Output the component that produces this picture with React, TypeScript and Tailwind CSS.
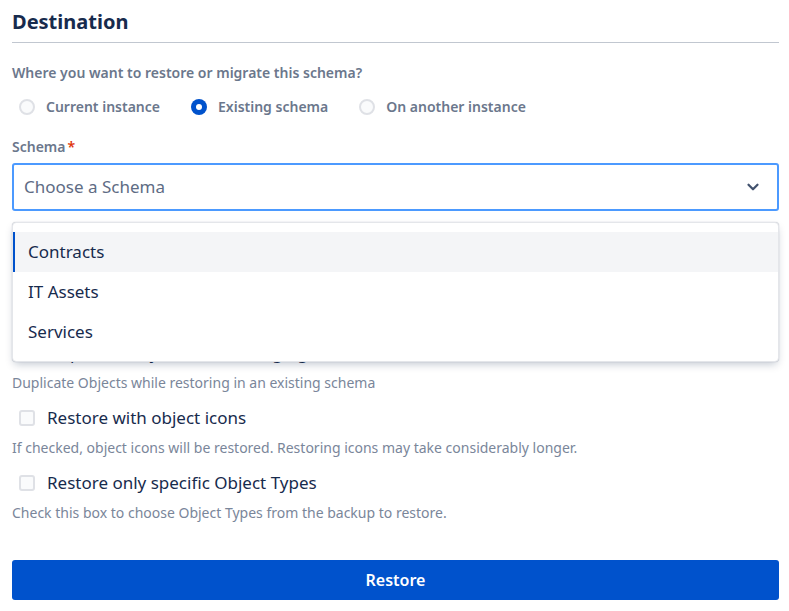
import { ChevronDown } from "lucide-react";

const FONT = "font-['Noto_Sans','Open_Sans',sans-serif]";

type RadioProps = { label: string; checked?: boolean };

function Radio({ label, checked = false }: RadioProps) {
  return (
    <label className="flex items-center gap-[11px]">
      {checked ? (
        <span className="flex h-4 w-4 items-center justify-center rounded-full bg-[#0052cc]">
          <span className="h-[6px] w-[6px] rounded-full bg-white" />
        </span>
      ) : (
        <span className="h-4 w-4 rounded-full border-2 border-[#dfe1e6] bg-[#fafbfc]" />
      )}
      <span className="text-[14px] font-semibold leading-5 text-[#6b778c]">{label}</span>
    </label>
  );
}

type OptionProps = { label: string; help: string };

function CheckOption({ label, help }: OptionProps) {
  return (
    <div>
      <label className="flex h-6 items-center gap-[12px] pl-[7px]">
        <span className="h-4 w-4 rounded-[3px] border-2 border-[#dfe1e6] bg-[#fafbfc]" />
        <span className="text-[17px] leading-6 text-[#172b4d]">{label}</span>
      </label>
      <p className="mt-2 text-[14px] leading-5 text-[#7a869a]">{help}</p>
    </div>
  );
}

const schemas = ["Contracts", "IT Assets", "Services"];

export default function App() {
  return (
    <div className={`${FONT} h-[611px] w-[789px] overflow-hidden bg-white pl-3 pr-[10px]`}>
      <h1 className="border-b border-[#c1c7d0] pb-[4px] pt-[6px] text-[20px] font-bold leading-8 text-[#172b4d]">
        Destination
      </h1>

      <p className="mt-[20px] text-[14px] font-semibold leading-5 text-[#6b778c]">
        Where you want to restore or migrate this schema?
      </p>
      <div className="mt-[14px] flex gap-[31px] pl-[7px]">
        <Radio label="Current instance" />
        <Radio label="Existing schema" checked />
        <Radio label="On another instance" />
      </div>

      <div className="relative mt-[20px]">
        <div className="text-[14px] font-semibold leading-5 text-[#6b778c]">
          Schema<span className="ml-[2px] text-[#de350b]">*</span>
        </div>
        <div className="mt-[6px] flex h-12 items-center justify-between rounded-[3px] border-2 border-[#4c9aff] bg-white pl-[10px] pr-[15px]">
          <span className="text-[17px] text-[#5e6c84]">Choose a Schema</span>
          <ChevronDown className="h-[18px] w-[18px] text-[#42526e]" strokeWidth={3} />
        </div>

        <ul className="absolute left-0 right-0 top-[85px] z-10 rounded-[4px] border border-[#e4e6ea] bg-white py-[9px] shadow-[0_4px_8px_-2px_rgba(9,30,66,0.25),0_0_1px_rgba(9,30,66,0.31)]">
          {schemas.map((s, i) => (
            <li
              key={s}
              className={
                i === 0
                  ? "flex h-10 items-center border-l-2 border-[#0052cc] bg-[#f4f5f7] pl-[13px] text-[17px] text-[#172b4d]"
                  : "flex h-10 items-center pl-[15px] text-[17px] text-[#172b4d]"
              }
            >
              {s}
            </li>
          ))}
        </ul>
      </div>

      <div className="mt-[130px] flex flex-col gap-[13px]">
        <CheckOption
          label="Duplicate Objects when merging"
          help="Duplicate Objects while restoring in an existing schema"
        />
        <CheckOption
          label="Restore with object icons"
          help="If checked, object icons will be restored. Restoring icons may take considerably longer."
        />
        <CheckOption
          label="Restore only specific Object Types"
          help="Check this box to choose Object Types from the backup to restore."
        />
      </div>

      <button className="mt-[37px] flex h-10 w-full items-center justify-center rounded-[3px] bg-[#0052cc] text-[16px] font-semibold text-white">
        Restore
      </button>
    </div>
  );
}
